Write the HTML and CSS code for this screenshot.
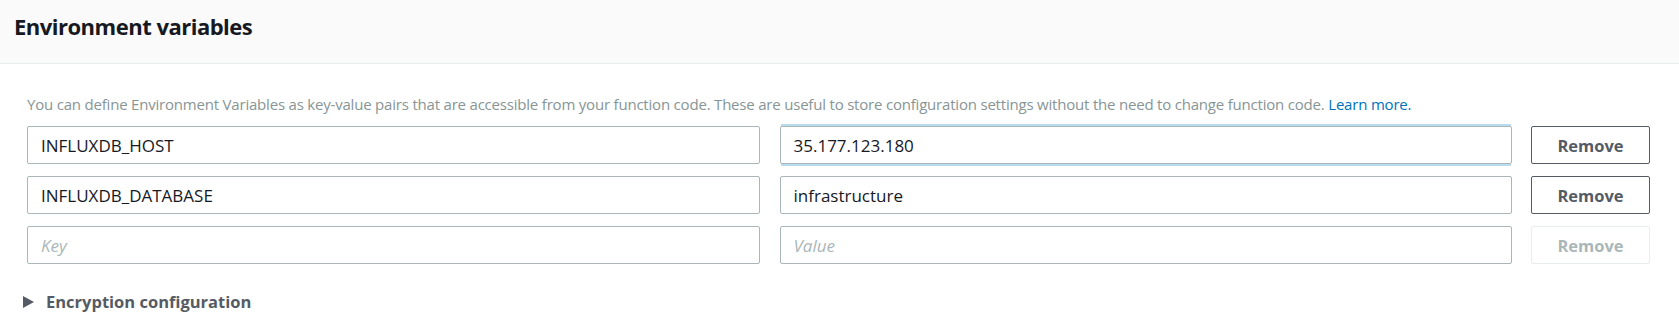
FILE: index.html
```html
<!DOCTYPE html>
<html lang="en">
<head>
<meta charset="utf-8">
<title>Environment variables</title>
<link rel="stylesheet" href="styles.css">
</head>
<body>
<section class="panel">
  <header class="panel-header">
    <h2 class="panel-title">Environment variables</h2>
  </header>
  <div class="panel-body">
    <p class="desc">You can define Environment Variables as key-value pairs that are accessible from your function code. These are useful to store configuration settings without the need to change function code. <a class="link" href="#">Learn more.</a></p>
    <div class="rows">
      <div class="row">
        <input class="field" type="text" value="INFLUXDB_HOST" placeholder="Key">
        <input class="field field-focus" type="text" value="35.177.123.180" placeholder="Value">
        <button class="btn" type="button">Remove</button>
      </div>
      <div class="row">
        <input class="field" type="text" value="INFLUXDB_DATABASE" placeholder="Key">
        <input class="field" type="text" value="infrastructure" placeholder="Value">
        <button class="btn" type="button">Remove</button>
      </div>
      <div class="row">
        <input class="field" type="text" value="" placeholder="Key">
        <input class="field" type="text" value="" placeholder="Value">
        <button class="btn btn-disabled" type="button" disabled>Remove</button>
      </div>
    </div>
    <div class="expander">
      <span class="caret"></span>
      <span class="expander-label">Encryption configuration</span>
    </div>
  </div>
</section>
</body>
</html>
```

FILE: styles.css
```css
* { box-sizing: border-box; }

body {
  margin: 0;
  background: #ffffff;
  font-family: "Open Sans", "Noto Sans", sans-serif;
  color: #16191f;
}

.panel-header {
  height: 64px;
  background: #fafafa;
  border-bottom: 1px solid #eaeded;
  padding: 10px 0 0 14px;
}

.panel-title {
  margin: 0;
  font-size: 22px;
  line-height: 32px;
  font-weight: 700;
  letter-spacing: -0.5px;
  color: #16191f;
}

.panel-body {
  padding: 29px 29px 0 27px;
}

.desc {
  margin: 0;
  font-size: 15px;
  line-height: 22px;
  letter-spacing: -0.2px;
  color: #879596;
}

.link {
  color: #0073bb;
  text-decoration: none;
}

.rows {
  display: flex;
  flex-direction: column;
  gap: 12px;
  margin-top: 11px;
}

.row {
  display: flex;
  gap: 20px;
  align-items: center;
}

.field {
  flex: 1 1 0;
  min-width: 0;
  height: 38px;
  border: 1px solid #aab7b8;
  border-radius: 2px;
  padding: 0 13px;
  font-family: inherit;
  font-size: 17px;
  color: #16191f;
  background: #ffffff;
  outline: none;
}

.field::placeholder {
  color: #aab7b8;
  font-style: italic;
}

.field-focus {
  box-shadow: 0 -3px 0 -1px #b7dcef, 0 3px 0 -1px #b7dcef;
}

.btn {
  flex: 0 0 119px;
  height: 38px;
  margin-left: -1px;
  border: 1px solid #545b64;
  border-radius: 2px;
  background: #ffffff;
  color: #545b64;
  font-family: inherit;
  font-size: 16.5px;
  font-weight: 700;
  padding: 0;
}

.btn-disabled {
  border-color: #eaeded;
  color: #aab7b8;
}

.expander {
  display: flex;
  align-items: center;
  gap: 12px;
  margin-top: 26px;
  margin-left: -4px;
}

.caret {
  width: 0;
  height: 0;
  border-top: 6px solid transparent;
  border-bottom: 6px solid transparent;
  border-left: 11px solid #545b64;
}

.expander-label {
  font-size: 16.5px;
  line-height: 24px;
  font-weight: 700;
  color: #545b64;
}
```
